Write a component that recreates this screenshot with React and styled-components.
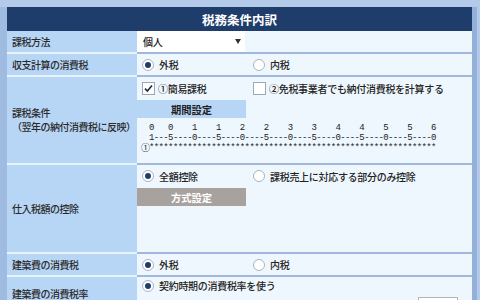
import React from "react";
import styled, { createGlobalStyle } from "styled-components";

const GlobalStyle = createGlobalStyle`
  html, body {
    margin: 0;
    padding: 0;
    background: #b3cbe9;
  }
  body {
    width: 480px;
    height: 300px;
    overflow: hidden;
    font-family: "Noto Sans CJK JP", "Noto Sans", sans-serif;
    color: #222;
  }
`;

const tensLine = Array.from({ length: 60 }, (_, i) => {
  const p = i + 1;
  return p === 1 || p % 5 === 0 ? String(Math.floor(p / 10)) : " ";
}).join("");

const unitLine = Array.from({ length: 60 }, (_, i) => {
  const p = i + 1;
  if (p === 1) return "1";
  return p % 5 === 0 ? String(p % 10) : "-";
}).join("");

const markLine = "*".repeat(60);

function Radio({ on, children }) {
  return (
    <Option>
      <RadioDot $on={on} />
      <span>{children}</span>
    </Option>
  );
}

function Check({ on, children }) {
  return (
    <Option $gap={3}>
      <CheckBox>
        {on && (
          <svg width="11" height="11" viewBox="0 0 11 11">
            <path d="M2 5.6 L4.4 8 L9 2.6" fill="none" stroke="#1c2a3a" strokeWidth="1.6" />
          </svg>
        )}
      </CheckBox>
      <span>{children}</span>
    </Option>
  );
}

function App() {
  return (
    <>
      <GlobalStyle />
      <Frame>
        <Header>税務条件内訳</Header>

        <Row $h={23}>
          <Label>課税方法</Label>
          <Value $flush>
            <SelectBox>
              <span>個人</span>
              <Caret />
            </SelectBox>
          </Value>
        </Row>

        <Row $h={23}>
          <Label>収支計算の消費税</Label>
          <Value>
            <OptionLine>
              <Radio on>外税</Radio>
              <Radio>内税</Radio>
            </OptionLine>
          </Value>
        </Row>

        <Row $h={88}>
          <Label>
            <div>課税条件</div>
            <div>（翌年の納付消費税に反映）</div>
          </Label>
          <Value>
            <OptionLine $h={22}>
              <Check on>①簡易課税</Check>
              <Check>②免税事業者でも納付消費税を計算する</Check>
            </OptionLine>
            <PanelBox>期間設定</PanelBox>
            <Ruler>
              <RulerLine>
                <RulerMark />
                <span>{tensLine}</span>
              </RulerLine>
              <RulerLine>
                <RulerMark />
                <span>{unitLine}</span>
              </RulerLine>
              <RulerLine>
                <RulerMark>①</RulerMark>
                <span>{markLine}</span>
              </RulerLine>
            </Ruler>
          </Value>
        </Row>

        <Row $h={89}>
          <Label>仕入税額の控除</Label>
          <Value>
            <OptionLine $h={22}>
              <Radio on>全額控除</Radio>
              <Radio>課税売上に対応する部分のみ控除</Radio>
            </OptionLine>
            <PanelBox $gray>方式設定</PanelBox>
          </Value>
        </Row>

        <Row $h={23}>
          <Label>建築費の消費税</Label>
          <Value>
            <OptionLine>
              <Radio on>外税</Radio>
              <Radio>内税</Radio>
            </OptionLine>
          </Value>
        </Row>

        <Row $h={36}>
          <Label>建築費の消費税率</Label>
          <Value>
            <OptionLine $h={17}>
              <Radio on>契約時期の消費税率を使う</Radio>
            </OptionLine>
            <OptionLine $h={17} $top>
              <RateInput />
            </OptionLine>
          </Value>
        </Row>
      </Frame>
    </>
  );
}

const Frame = styled.div`
  margin-top: 7px;
  width: 465px;
  border-left: 7px solid #a0bbe0;
  border-right: 5px solid #93b0db;
  background: #eef7fd;
`;

const Header = styled.div`
  height: 24px;
  background: #1f3d6b;
  color: #fff;
  font-weight: 700;
  font-size: 12.5px;
  display: flex;
  align-items: center;
  justify-content: center;
`;

const Row = styled.div`
  display: grid;
  grid-template-columns: 130px 1fr;
  grid-auto-rows: ${(p) => p.$h}px;
`;

const Label = styled.div`
  box-sizing: border-box;
  background: #b7d5f5;
  border-bottom: 2px solid #e9f3fd;
  padding-left: 5px;
  display: flex;
  flex-direction: column;
  justify-content: center;
  font-size: 10px;
  font-weight: 500;
  line-height: 14px;
  letter-spacing: -0.5px;
  color: #2a2a2a;
  white-space: nowrap;
`;

const Value = styled.div`
  box-sizing: border-box;
  border-bottom: 2px solid #a2b7de;
  padding-left: ${(p) => (p.$flush ? 0 : 5)}px;
  display: flex;
  flex-direction: column;
  font-size: 10px;
  font-weight: 500;
  letter-spacing: -0.3px;
  overflow: hidden;
`;

const SelectBox = styled.div`
  box-sizing: border-box;
  width: 108px;
  height: 100%;
  background: #fff;
  display: flex;
  align-items: center;
  justify-content: space-between;
  padding: 0 4px 0 6px;
`;

const Caret = styled.span`
  width: 0;
  height: 0;
  border-left: 3px solid transparent;
  border-right: 3px solid transparent;
  border-top: 5px solid #333;
`;

const OptionLine = styled.div`
  display: flex;
  align-items: ${(p) => (p.$top ? "flex-start" : "center")};
  padding-top: ${(p) => (p.$top ? 3 : 0)}px;
  box-sizing: border-box;
  height: ${(p) => p.$h || 21}px;
  flex-shrink: 0;
`;

const Option = styled.label`
  display: flex;
  align-items: center;
  gap: ${(p) => p.$gap ?? 5}px;
  min-width: 111px;
  flex-shrink: 0;
  white-space: nowrap;
`;

const RadioDot = styled.span`
  box-sizing: border-box;
  flex-shrink: 0;
  width: 12px;
  height: 12px;
  border-radius: 50%;
  border: 1px solid #aab4c0;
  background: #fff;
  display: flex;
  align-items: center;
  justify-content: center;

  &::after {
    content: "";
    width: 6px;
    height: 6px;
    border-radius: 50%;
    background: ${(p) => (p.$on ? "#1f3d6b" : "transparent")};
  }
`;

const CheckBox = styled.span`
  box-sizing: border-box;
  flex-shrink: 0;
  width: 13px;
  height: 13px;
  border: 1px solid #9ea8b4;
  background: #fff;
  display: flex;
  align-items: center;
  justify-content: center;
`;

const PanelBox = styled.div`
  width: 109px;
  height: 18px;
  margin: 1px 0 0 -5px;
  flex-shrink: 0;
  background: ${(p) => (p.$gray ? "#a8a29e" : "#b7d5f5")};
  color: ${(p) => (p.$gray ? "#fff" : "#222")};
  font-weight: 700;
  font-size: 10.3px;
  letter-spacing: 0;
  display: flex;
  align-items: center;
  justify-content: center;
`;

const Ruler = styled.div`
  padding-top: 5px;
  font-family: "Liberation Mono", monospace;
  font-size: 9px;
  font-weight: 400;
  line-height: 10px;
  letter-spacing: -0.62px;
  color: #222;
`;

const RulerLine = styled.div`
  display: flex;
  white-space: pre;
`;

const RulerMark = styled.span`
  width: 8px;
  flex-shrink: 0;
  font-family: "Noto Sans CJK JP", sans-serif;
  font-size: 9px;
  letter-spacing: 0;
  margin-left: -1px;
`;

const RateInput = styled.span`
  margin-left: auto;
  margin-right: 14px;
  width: 40px;
  height: 16px;
  box-sizing: border-box;
  border: 1px solid #b4b4b4;
  background: #fff;
`;

export default App;
